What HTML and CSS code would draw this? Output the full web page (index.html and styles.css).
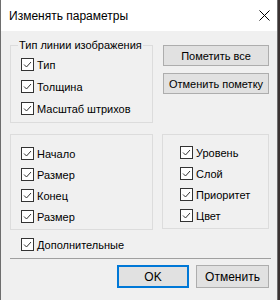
FILE: index.html
```
<!DOCTYPE html>
<html lang="ru">
<head>
  <meta charset="UTF-8" />
  <title>Изменять параметры</title>
  <link rel="stylesheet" href="styles.css">
</head>
<body>
  <div class="window">
    <!-- ========== TITLE BAR ========== -->
    <div class="titlebar">
      <span class="title">Изменять параметры</span>
      <svg class="close" width="11" height="11" viewBox="0 0 11 11">
        <path d="M0.5 0.5 L10.5 10.5 M10.5 0.5 L0.5 10.5" stroke="#000" stroke-width="1" fill="none"/>
      </svg>
    </div>

    <div class="content">
      <!-- ========== LINE TYPE + SIDE BUTTONS ========== -->
      <div class="top-row">
        <fieldset class="group group-type">
          <legend>Тип линии изображения</legend>
          <label class="check"><span class="box"><svg width="11" height="11"><polyline points="2,5.5 4.5,8 9,3" /></svg></span>Тип</label>
          <label class="check"><span class="box"><svg width="11" height="11"><polyline points="2,5.5 4.5,8 9,3" /></svg></span>Толщина</label>
          <label class="check"><span class="box"><svg width="11" height="11"><polyline points="2,5.5 4.5,8 9,3" /></svg></span>Масштаб штрихов</label>
        </fieldset>
        <div class="side-buttons">
          <button class="btn">Пометить все</button>
          <button class="btn">Отменить пометку</button>
        </div>
      </div>

      <!-- ========== ENDS + PROPERTIES ========== -->
      <div class="mid-row">
        <div class="group group-ends">
          <label class="check"><span class="box"><svg width="11" height="11"><polyline points="2,5.5 4.5,8 9,3" /></svg></span>Начало</label>
          <label class="check"><span class="box"><svg width="11" height="11"><polyline points="2,5.5 4.5,8 9,3" /></svg></span>Размер</label>
          <label class="check"><span class="box"><svg width="11" height="11"><polyline points="2,5.5 4.5,8 9,3" /></svg></span>Конец</label>
          <label class="check"><span class="box"><svg width="11" height="11"><polyline points="2,5.5 4.5,8 9,3" /></svg></span>Размер</label>
        </div>
        <div class="group group-props">
          <label class="check"><span class="box"><svg width="11" height="11"><polyline points="2,5.5 4.5,8 9,3" /></svg></span>Уровень</label>
          <label class="check"><span class="box"><svg width="11" height="11"><polyline points="2,5.5 4.5,8 9,3" /></svg></span>Слой</label>
          <label class="check"><span class="box"><svg width="11" height="11"><polyline points="2,5.5 4.5,8 9,3" /></svg></span>Приоритет</label>
          <label class="check"><span class="box"><svg width="11" height="11"><polyline points="2,5.5 4.5,8 9,3" /></svg></span>Цвет</label>
        </div>
      </div>

      <label class="check extra"><span class="box"><svg width="11" height="11"><polyline points="2,5.5 4.5,8 9,3" /></svg></span>Дополнительные</label>

      <div class="separator"></div>

      <!-- ========== DIALOG BUTTONS ========== -->
      <div class="footer">
        <button class="btn btn-dialog btn-ok">OK</button>
        <button class="btn btn-dialog btn-cancel">Отменить</button>
      </div>
    </div>
  </div>
</body>
</html>
```

FILE: styles.css
```
* {
  margin: 0;
  padding: 0;
  box-sizing: border-box;
}

body {
  font-family: 'Liberation Sans', Arial, sans-serif;
  font-size: 11px;
  color: #000;
  background: #3a3232;
  width: 280px;
  height: 300px;
  overflow: hidden;
}

/* =========================================
   WINDOW FRAME
   ========================================= */
.window {
  width: 278px;
  height: 300px;
  background: #f0f0f0;
  border-left: 1px solid #6e6e6e;
  border-right: 1px solid #6e6e6e;
}

.titlebar {
  height: 31px;
  background: #fff;
  display: flex;
  align-items: center;
  justify-content: space-between;
  padding: 0 7px 0 8px;
}

.title {
  font-size: 12px;
}

.close {
  display: block;
}

/* =========================================
   CONTENT
   ========================================= */
.content {
  padding: 8px 8px 0 9px;
}

.top-row {
  display: flex;
  gap: 10px;
}

.group {
  border: 1px solid #dcdcdc;
}

fieldset.group-type {
  width: 143px;
  padding: 2px 0 3px 7px;
  min-width: 0;
}

.group-type legend {
  padding: 0 1px;
  line-height: 13px;
}

.group-type .check {
  margin-left: 3px;
}

.group-type .check + .check {
  margin-top: 1px;
}

.side-buttons {
  width: 106px;
  margin-top: 6px;
  display: flex;
  flex-direction: column;
  gap: 7px;
}

.btn {
  font-family: 'Liberation Sans', Arial, sans-serif;
  font-size: 11px;
  color: #000;
  background: #e1e1e1;
  border: 1px solid #adadad;
  height: 21px;
  width: 100%;
}

.mid-row {
  display: flex;
  gap: 9px;
  margin-top: 11px;
}

.group-ends {
  width: 143px;
  height: 96px;
  padding: 8px 0 0 10px;
}

.group-props {
  width: 107px;
  height: 95px;
  padding: 7px 0 0 17px;
}

/* =========================================
   CHECKBOXES
   ========================================= */
.check {
  display: flex;
  align-items: center;
  gap: 3px;
  height: 21px;
  white-space: nowrap;
}

.box {
  width: 13px;
  height: 13px;
  border: 1px solid #333;
  background: #fff;
  flex: none;
}

.box svg {
  display: block;
}

.box polyline {
  fill: none;
  stroke: #333;
  stroke-width: 1;
}

.extra {
  margin: 4px 0 0 11px;
}

/* =========================================
   FOOTER
   ========================================= */
.separator {
  height: 1px;
  background: #a0a0a0;
  margin: 3px -2px 0 0;
}

.footer {
  display: flex;
  justify-content: flex-end;
  gap: 7px;
  margin-top: 6px;
}

.btn-dialog {
  font-size: 12px;
  height: 23px;
}

.btn-ok {
  width: 72px;
  border: 2px solid #0078d7;
}

.btn-cancel {
  width: 73px;
}
```
